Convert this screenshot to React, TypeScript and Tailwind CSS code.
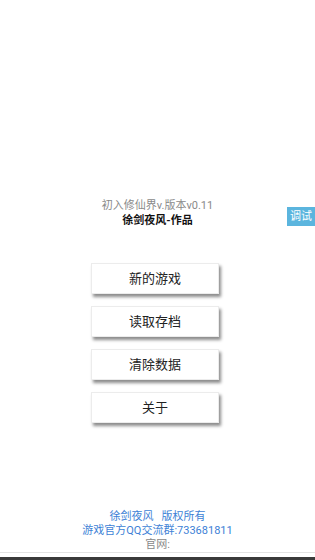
const MENU = ["新的游戏", "读取存档", "清除数据", "关于"];

const font = { fontFamily: 'Roboto, "Noto Sans CJK SC", sans-serif' };

export default function App() {
  return (
    <div className="relative w-[315px] h-[560px] bg-white overflow-hidden flex flex-col" style={font}>
      {/* Title */}
      <div className="pt-[198px] flex flex-col items-center">
        <div className="text-[11px] leading-[15px] text-[#8a8a8a]">初入修仙界v.版本v0.11</div>
        <div className="text-[11px] leading-[15px] font-bold text-[#111]">徐剑夜风-作品</div>
      </div>

      {/* Debug button */}
      <div className="absolute right-0 top-[207px] w-[28px] h-[19px] bg-[#5bb5de] text-white text-[11px] leading-[19px] text-center">
        调试
      </div>

      {/* Menu */}
      <div className="mt-[35px] flex flex-col items-center gap-[12px] pr-[5px]">
        {MENU.map((m) => (
          <div
            key={m}
            className="w-[128px] h-[31px] bg-white border border-[#ececec] shadow-[2px_3px_3px_rgba(0,0,0,0.45)] flex items-center justify-center text-[13px] text-[#222]"
          >
            {m}
          </div>
        ))}
      </div>

      {/* Footer */}
      <div className="mt-auto flex flex-col items-center text-[11px] leading-[14px]">
        <div className="text-[#3d7fd6]">徐剑夜风&nbsp;&nbsp;&nbsp;版权所有</div>
        <div className="text-[#3d7fd6]">游戏官方QQ交流群:733681811</div>
        <div className="text-[#888]">官网:</div>
      </div>
      <div className="h-px bg-[#e4e4e4]" />
      <div className="h-[4px] bg-white" />
      <div className="h-[3px] bg-[#3a3a3a]" />
    </div>
  );
}
